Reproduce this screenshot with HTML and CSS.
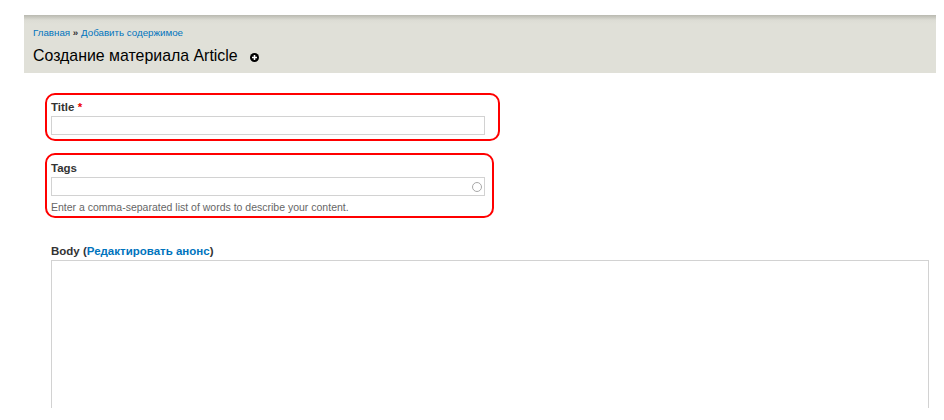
FILE: index.html
```html
<!DOCTYPE html>
<html lang="ru">
<head>
<meta charset="utf-8">
<title>Создание материала Article</title>
<link rel="stylesheet" href="styles.css">
</head>
<body>
<header class="page-head">
  <nav class="crumbs"><a href="#">Главная</a> <b class="sep">»</b> <a href="#">Добавить содержимое</a></nav>
  <h1 class="page-title">Создание материала Article
    <svg class="shortcut" width="9" height="9" viewBox="0 0 9 9" aria-hidden="true"><circle cx="4.5" cy="4.5" r="4.5" fill="#000"/><path d="M4.5 2v5M2 4.5h5" stroke="#fff" stroke-width="1.6"/></svg>
  </h1>
</header>
<main class="content">
  <div class="field field-title">
    <label class="label">Title <span class="req">*</span></label>
    <div class="input"></div>
  </div>
  <div class="field field-tags">
    <label class="label">Tags</label>
    <div class="input input-auto"><span class="throbber"></span></div>
    <p class="hint">Enter a comma-separated list of words to describe your content.</p>
  </div>
  <div class="body-field">
    <label class="label">Body (<a href="#">Редактировать анонс</a>)</label>
    <div class="textarea"></div>
  </div>
</main>
</body>
</html>
```
FILE: styles.css
```css
* { box-sizing: border-box; }
html, body { margin: 0; height: 420px; overflow: hidden; background: #fff; }
body {
  padding-top: 15px;
  font-family: "Liberation Sans", Arial, sans-serif;
  color: #333;
}
a { color: #0074bd; text-decoration: none; }

.page-head {
  height: 58px;
  margin: 0 8px 0 24px;
  padding: 12px 0 0 9px;
  background: linear-gradient(#b9b9b0 0, #dcdcd4 5px, #e0e0d8 9px);
}
.crumbs { font-size: 9.75px; line-height: 12px; color: #333; }
.sep { font-weight: 700; }
.page-title {
  margin: 7px 0 0;
  font-size: 15.9px;
  font-weight: 400;
  line-height: 20px;
  color: #000;
}
.shortcut { margin-left: 8px; vertical-align: -1px; }

.content { padding: 20px 15px 0 45px; }
.field {
  border: 2px solid #f00;
  border-radius: 10px;
  padding: 4px;
}
.field-title { width: 455px; height: 48px; padding-right: 13px; }
.field-tags { width: 449px; height: 65px; margin-top: 12px; padding: 5px 7px 4px 4px; }

.label {
  display: block;
  font-size: 11.5px;
  font-weight: 700;
  line-height: 17px;
  color: #333;
}
.req { color: #e00; }
.input {
  height: 19px;
  width: 434px;
  border: 1px solid #d2d2d2;
  background: #fff;
}
.input-auto { display: flex; align-items: center; justify-content: flex-end; padding-right: 2px; }
.throbber {
  width: 10px;
  height: 10px;
  border: 1px solid #a8a8a8;
  border-radius: 50%;
}
.hint { margin: 5px 0 0; font-size: 10.5px; line-height: 13px; color: #666; }

.body-field { margin: 25px 0 0 6px; }
.textarea {
  height: 148px;
  border: 1px solid #d2d2d2;
  border-bottom: 0;
}
```
